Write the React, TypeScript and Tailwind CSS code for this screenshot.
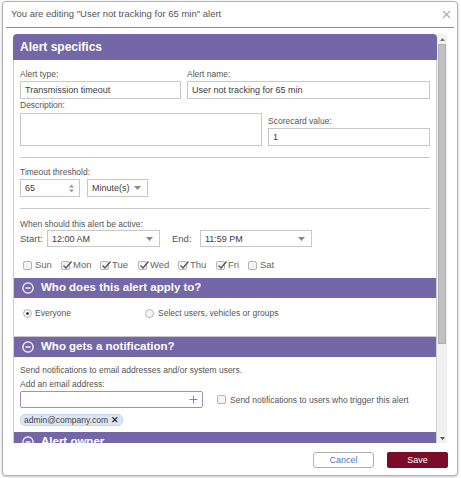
import React from "react"

const font = { fontFamily: '"Liberation Sans", Arial, sans-serif' }

function Caret() {
  return (
    <svg width="7" height="4" viewBox="0 0 7 4" className="shrink-0">
      <path d="M0 0h7L3.5 4z" fill="#888" />
    </svg>
  )
}

function Check({ checked }: { checked: boolean }) {
  return (
    <span className="relative w-[9px] h-[9px] border border-[#b5b5b5] bg-[#f4f4f4] rounded-[2px] shrink-0">
      {checked && (
        <svg width="11" height="10" viewBox="0 0 11 10" className="absolute left-[0px] top-[-2px]">
          <path d="M1.5 5.5 L4 8 L9.5 1.5" stroke="#555" strokeWidth="1.3" fill="none" />
        </svg>
      )}
    </span>
  )
}

function Radio({ on }: { on: boolean }) {
  return (
    <span className="flex items-center justify-center w-[9px] h-[9px] rounded-full border border-[#b5b5b5] bg-[#f4f4f4] shrink-0">
      {on && <span className="w-[3px] h-[3px] rounded-full bg-[#444]" />}
    </span>
  )
}

function MinusCircle() {
  return (
    <svg width="12" height="12" viewBox="0 0 13 13" className="shrink-0">
      <circle cx="6.5" cy="6.5" r="5.6" stroke="white" strokeWidth="1.4" fill="none" />
      <path d="M3.8 6.5h5.4" stroke="white" strokeWidth="1.5" />
    </svg>
  )
}

function SectionHeader({ title }: { title: string }) {
  return (
    <div className="h-[20px] bg-[#7467a8] flex items-center gap-[7px] pl-[8px] text-white text-[11.5px] font-bold shrink-0">
      <MinusCircle />
      <span>{title}</span>
    </div>
  )
}

const days = [
  { d: "Sun", c: false, w: "w-[38px]" },
  { d: "Mon", c: true, w: "w-[39px]" },
  { d: "Tue", c: true, w: "w-[38px]" },
  { d: "Wed", c: true, w: "w-[40px]" },
  { d: "Thu", c: true, w: "w-[38px]" },
  { d: "Fri", c: true, w: "w-[32px]" },
  { d: "Sat", c: false, w: "w-[30px]" },
]

const inputText = "text-[9px] text-[#3c3c3c]"

export default function App() {
  return (
    <div style={font} className="w-[461px] h-[478px] bg-white overflow-hidden">
      <div className="ml-[2px] mt-[1px] w-[456px] h-[475px] border border-[#b3b3b3] rounded-[4px] bg-white shadow-[0_1px_3px_rgba(0,0,0,0.25)] flex flex-col">
        {/* title */}
        <div className="h-[25px] flex items-center justify-between pl-[8px] pr-[6px]">
          <span className="text-[9.5px] text-[#555]">You are editing "User not tracking for 65 min" alert</span>
          <svg width="9" height="9" viewBox="0 0 9 9">
            <path d="M1 1L8 8M8 1L1 8" stroke="#b0b0b0" strokeWidth="1.4" />
          </svg>
        </div>
        <div className="mx-[3px] border-t border-[#8a8a8a]" />

        {/* scroll area */}
        <div className="flex ml-[10px] mt-[6px] h-[409px]">
          <div className="w-[424px] overflow-hidden flex flex-col">
            <div className="h-[26px] shrink-0 bg-[#7467a8] rounded-t-[4px] flex items-center pl-[7px] text-white text-[12px] font-bold">
              Alert specifics
            </div>
            <div className="border-x border-[#cfcfcf] flex flex-col shrink-0">
              <div className="px-[6px] pt-[8px] pb-[7px] text-[8.5px] text-[#555] leading-[12px]">
                <div className="flex gap-[6px]">
                  <div className="w-[161px]">
                    <div>Alert type:</div>
                    <div className={`mt-[1px] h-[18px] border border-[#c8c8c8] flex items-center px-[4px] ${inputText}`}>
                      Transmission timeout
                    </div>
                  </div>
                  <div className="flex-1">
                    <div>Alert name:</div>
                    <div className={`mt-[1px] h-[18px] border border-[#c8c8c8] flex items-center px-[4px] ${inputText}`}>
                      User not tracking for 65 min
                    </div>
                  </div>
                </div>
                <div className="flex gap-[6px] items-end">
                  <div className="w-[242px]">
                    <div>Description:</div>
                    <div className="mt-[2px] h-[33px] border border-[#c8c8c8]" />
                  </div>
                  <div className="flex-1">
                    <div>Scorecard value:</div>
                    <div className={`mt-[1px] h-[18px] border border-[#c8c8c8] flex items-center px-[4px] ${inputText}`}>
                      1
                    </div>
                  </div>
                </div>
                <div className="mt-[11px] border-t border-[#c8c8c8]" />
                <div className="mt-[8px]">Timeout threshold:</div>
                <div className="mt-[1px] flex gap-[7px]">
                  <div className={`w-[60px] h-[18px] border border-[#c8c8c8] flex items-center justify-between pl-[4px] pr-[5px] ${inputText}`}>
                    <span>65</span>
                    <svg width="5" height="9" viewBox="0 0 5 9">
                      <path d="M0 3.5L2.5 0.5L5 3.5zM0 5.5L2.5 8.5L5 5.5z" fill="#999" />
                    </svg>
                  </div>
                  <div className={`w-[61px] h-[18px] border border-[#c8c8c8] flex items-center justify-between pl-[4px] pr-[6px] ${inputText}`}>
                    <span>Minute(s)</span>
                    <Caret />
                  </div>
                </div>
                <div className="mt-[11px] border-t border-[#c8c8c8]" />
                <div className="mt-[9px]">When should this alert be active:</div>
                <div className="flex items-center h-[17px]">
                  <span className="w-[27px] text-[9.5px]">Start:</span>
                  <div className={`w-[113px] h-[17px] border border-[#c8c8c8] flex items-center justify-between pl-[4px] pr-[6px] ${inputText}`}>
                    <span>12:00 AM</span>
                    <Caret />
                  </div>
                  <span className="ml-[12px] w-[28px] text-[9.5px]">End:</span>
                  <div className={`w-[112px] h-[17px] border border-[#c8c8c8] flex items-center justify-between pl-[4px] pr-[6px] ${inputText}`}>
                    <span>11:59 PM</span>
                    <Caret />
                  </div>
                </div>
                <div className="mt-[12px] flex pl-[3px] h-[12px] items-center text-[9.5px]">
                  {days.map((x) => (
                    <label key={x.d} className={`${x.w} flex items-center gap-[3px] text-[#666]`}>
                      <Check checked={x.c} />
                      <span>{x.d}</span>
                    </label>
                  ))}
                </div>
              </div>

              <SectionHeader title="Who does this alert apply to?" />
              <div className="h-[39px] px-[6px] pt-[9px] text-[8.5px] text-[#555] leading-[12px] border-b border-[#c8c8c8]">
                <div className="flex items-center pl-[3px]">
                  <label className="w-[122px] flex items-center gap-[3px]">
                    <Radio on={true} />
                    <span>Everyone</span>
                  </label>
                  <label className="flex items-center gap-[4px]">
                    <Radio on={false} />
                    <span>Select users, vehicles or groups</span>
                  </label>
                </div>
              </div>

              <SectionHeader title="Who gets a notification?" />
              <div className="px-[6px] pt-[7px] pb-[6px] text-[8.5px] text-[#555] leading-[12px]">
                <div>Send notifications to email addresses and/or system users.</div>
                <div className="mt-[2px]">Add an email address:</div>
                <div className="mt-[1px] flex items-center">
                  <div className="w-[183px] h-[17px] border border-[#9a90cc] rounded-[2px] flex items-center justify-end pr-[4px] shrink-0">
                    <svg width="9" height="9" viewBox="0 0 9 9">
                      <path d="M4.5 0.5v8M0.5 4.5h8" stroke="#888" strokeWidth="1" />
                    </svg>
                  </div>
                  <label className="ml-[14px] flex items-center gap-[4px] whitespace-nowrap">
                    <Check checked={false} />
                    <span>Send notifications to users who trigger this alert</span>
                  </label>
                </div>
                <div className="mt-[6px] flex">
                  <span className="h-[12px] flex items-center gap-[3px] bg-[#dbe5f5] border border-[#c5d4ee] rounded-[5px] px-[3px] text-[#444]">
                    admin@company.com
                    <span className="text-[#333] font-bold text-[9px]">✕</span>
                  </span>
                </div>
              </div>

              <SectionHeader title="Alert owner" />
            </div>
          </div>

          {/* scrollbar */}
          <div className="w-[10px] h-[409px] bg-[#f1f1f1] flex flex-col items-center shrink-0">
            <div className="h-[10px] w-full flex items-center justify-center">
              <svg width="5" height="3" viewBox="0 0 5 3">
                <path d="M0 3L2.5 0L5 3z" fill="#777" />
              </svg>
            </div>
            <div className="w-[8px] h-[300px] bg-[#c1c1c1] border border-[#b0b0b0]" />
            <div className="flex-1" />
            <div className="h-[10px] w-full flex items-center justify-center">
              <svg width="5" height="3" viewBox="0 0 5 3">
                <path d="M0 0L2.5 3L5 0z" fill="#555" />
              </svg>
            </div>
          </div>
        </div>

        {/* footer */}
        <div className="mt-[9px] flex justify-end gap-[13px] pr-[9px]">
          <button className="w-[61px] h-[16px] border border-[#b0b0b0] rounded-[3px] bg-white text-[9px] text-[#4f7cbc] leading-none">
            Cancel
          </button>
          <button className="w-[61px] h-[16px] rounded-[2px] bg-[#7b0a2b] text-[9px] text-white leading-none">
            Save
          </button>
        </div>
      </div>
    </div>
  )
}
